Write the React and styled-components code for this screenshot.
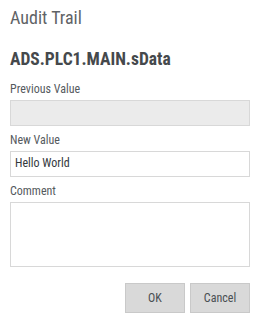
import React from "react";
import styled, { createGlobalStyle } from "styled-components";

const Global = createGlobalStyle`
  html, body { margin: 0; padding: 0; background: #fff; }
  body { font-family: "Roboto Condensed", Roboto, "Liberation Sans", sans-serif; font-stretch: 87.5%; }
  * { box-sizing: border-box; }
`;

const Dialog = styled.div`
  width: 260px;
  height: 322px;
  padding: 7px 10px 0;
  display: flex;
  flex-direction: column;
  background: #fff;
`;

const Title = styled.div`
  font-size: 18px;
  line-height: 22px;
  font-weight: 400;
  color: #5f6366;
`;

const Heading = styled.div`
  margin-top: 19px;
  font-size: 17.5px;
  line-height: 22px;
  font-weight: 700;
  color: #45494c;
`;

const Form = styled.div`
  margin-top: 11px;
  display: flex;
  flex-direction: column;
`;

const Field = styled.div`
  display: flex;
  flex-direction: column;
  gap: 3px;
  & + & { margin-top: 6px; }
`;

const Label = styled.label`
  font-size: 12px;
  line-height: 16px;
  color: #555a5e;
`;

const Input = styled.div`
  height: ${p => p.$h || 26}px;
  border: 1.5px solid #d8d8d8;
  background: ${p => (p.$disabled ? "#ebebeb" : "#fff")};
  padding: 0 4px;
  font-size: 12px;
  line-height: 23px;
  color: #33383c;
`;

const Actions = styled.div`
  margin-top: 16px;
  display: flex;
  justify-content: flex-end;
  gap: 5px;
`;

const Button = styled.button`
  width: 60px;
  height: 30px;
  border: 1.5px solid #c9c9c9;
  background: #d9d9d9;
  font-family: inherit;
  font-stretch: inherit;
  font-size: 12px;
  color: #4a4f53;
  padding: 0;
`;

export default function App() {
  return (
    <Dialog>
      <Global />
      <Title>Audit Trail</Title>
      <Heading>ADS.PLC1.MAIN.sData</Heading>
      <Form>
        <Field>
          <Label>Previous Value</Label>
          <Input $disabled />
        </Field>
        <Field>
          <Label>New Value</Label>
          <Input>Hello World</Input>
        </Field>
        <Field>
          <Label>Comment</Label>
          <Input $h={65} />
        </Field>
      </Form>
      <Actions>
        <Button>OK</Button>
        <Button>Cancel</Button>
      </Actions>
    </Dialog>
  );
}
